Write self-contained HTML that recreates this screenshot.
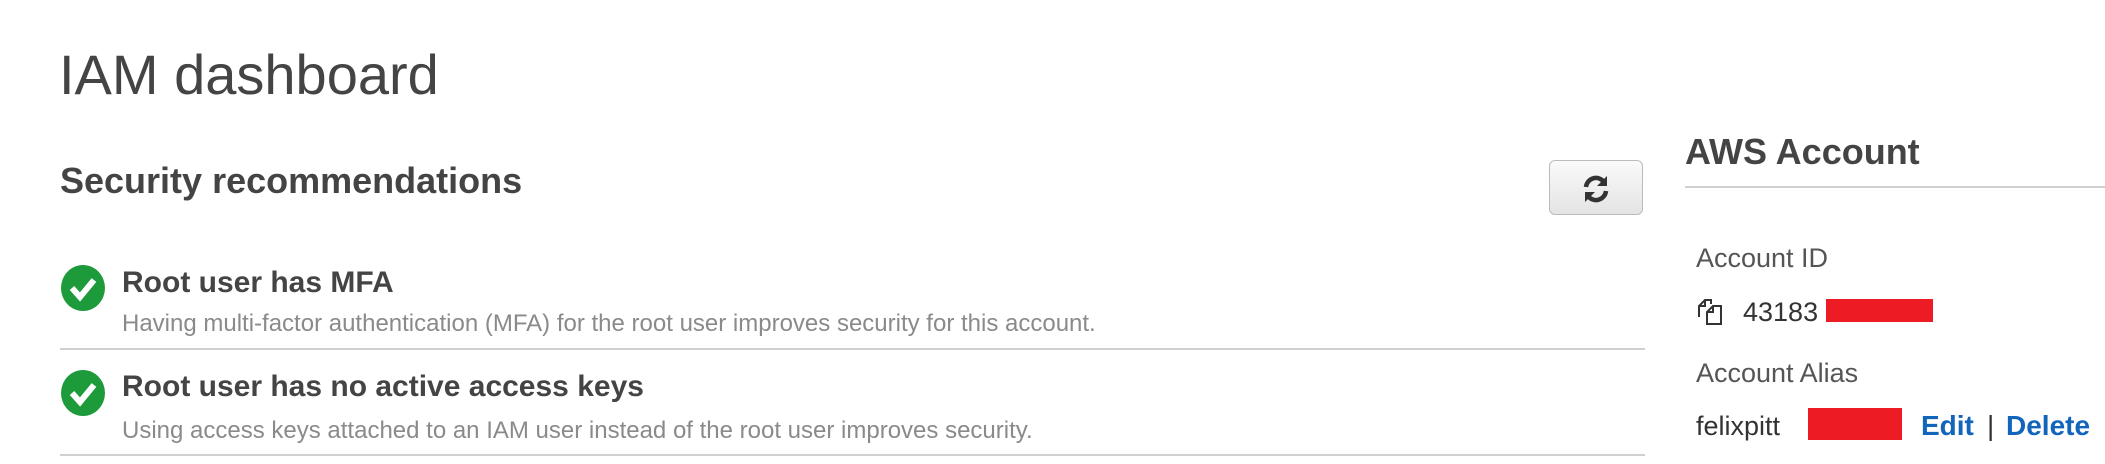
<!DOCTYPE html>
<html><head><meta charset="utf-8"><style>
html,body{margin:0;padding:0;background:#fff;width:2105px;height:464px;overflow:hidden;position:relative;font-family:"Liberation Sans",Arial,sans-serif}
.t{position:absolute;line-height:1;white-space:nowrap}
.line{position:absolute;height:2px;background:#d0d0d0}
</style></head><body>
<div class="t" style="left:59px;top:47px;font-size:56px;color:#444">IAM dashboard</div>
<div class="t" style="left:60px;top:163px;font-size:36px;font-weight:bold;color:#444">Security recommendations</div>

<div style="position:absolute;left:1549px;top:160px;width:94px;height:55px;border:1px solid #bbb;border-radius:6px;background:linear-gradient(#fafafa,#e4e4e4);box-sizing:border-box"></div>
<svg style="position:absolute;left:1580px;top:173px" width="32" height="32" viewBox="0 0 32 32">
<path d="M6 14 A10 10 0 0 1 24 9" fill="none" stroke="#333" stroke-width="4.5"/>
<path d="M27 3 L27 13 L17 13 Z" fill="#333"/>
<path d="M26 18 A10 10 0 0 1 8 23" fill="none" stroke="#333" stroke-width="4.5"/>
<path d="M5 29 L5 19 L15 19 Z" fill="#333"/>
</svg>

<svg style="position:absolute;left:61px;top:265px" width="44" height="46" viewBox="0 0 44 46"><ellipse cx="22" cy="23" rx="22" ry="23" fill="#1d9a3a"/><path d="M11 23 L19 32 L33 15" fill="none" stroke="#fff" stroke-width="6"/></svg>
<div class="t" style="left:122px;top:268px;font-size:30px;font-weight:bold;color:#444">Root user has MFA</div>
<div class="t" style="left:122px;top:312px;font-size:24px;color:#8a8a8a">Having multi-factor authentication (MFA) for the root user improves security for this account.</div>
<div class="line" style="left:60px;top:348px;width:1585px"></div>

<svg style="position:absolute;left:61px;top:370px" width="44" height="46" viewBox="0 0 44 46"><ellipse cx="22" cy="23" rx="22" ry="23" fill="#1d9a3a"/><path d="M11 23 L19 32 L33 15" fill="none" stroke="#fff" stroke-width="6"/></svg>
<div class="t" style="left:122px;top:372px;font-size:30px;font-weight:bold;color:#444">Root user has no active access keys</div>
<div class="t" style="left:122px;top:419px;font-size:24px;color:#8a8a8a">Using access keys attached to an IAM user instead of the root user improves security.</div>
<div class="line" style="left:60px;top:454px;width:1585px"></div>

<div class="t" style="left:1685px;top:134px;font-size:36px;font-weight:bold;color:#444">AWS Account</div>
<div class="line" style="left:1685px;top:186px;width:420px"></div>
<div class="t" style="left:1696px;top:245px;font-size:27px;color:#555">Account ID</div>
<svg style="position:absolute;left:1698px;top:298px" width="28" height="28" viewBox="0 0 28 28" fill="none" stroke="#333" stroke-width="2"><path d="M1 19 V8 L7 2 H13 V6 M1 8 H7 V2"/><path d="M9 26 V14 L15 8 H23 V26 Z M9 14 H15 V8"/></svg>
<div class="t" style="left:1743px;top:299px;font-size:27px;color:#333">43183</div>
<div style="position:absolute;left:1826px;top:299px;width:107px;height:23px;background:#ed1c24"></div>
<div class="t" style="left:1696px;top:360px;font-size:27px;color:#555">Account Alias</div>
<div class="t" style="left:1696px;top:413px;font-size:27px;color:#333">felixpitt</div>
<div style="position:absolute;left:1808px;top:408px;width:94px;height:32px;background:#ed1c24"></div>
<div class="t" style="left:1921px;top:412px;font-size:28px;font-weight:bold;color:#1166bb">Edit</div>
<div class="t" style="left:1987px;top:412px;font-size:28px;color:#333">|</div>
<div class="t" style="left:2006px;top:412px;font-size:28px;font-weight:bold;color:#1166bb">Delete</div>
</body></html>
